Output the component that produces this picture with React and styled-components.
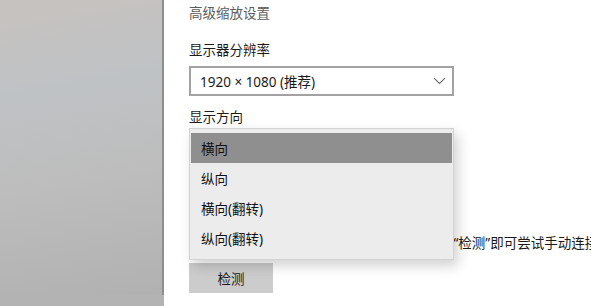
import React from 'react';
import styled, { createGlobalStyle } from 'styled-components';

const GlobalStyle = createGlobalStyle`
  html, body {
    margin: 0;
    padding: 0;
    width: 591px;
    height: 306px;
    overflow: hidden;
    background: #fff;
  }
  body {
    font-family: "Noto Sans", "Noto Sans CJK SC", sans-serif;
    font-size: 13.5px;
    color: #1a1a1a;
  }
`;

const ORIENTATIONS = ['横向', '纵向', '横向(翻转)', '纵向(翻转)'];

function ChevronDown() {
  return (
    <svg width="13" height="8" viewBox="0 0 13 8">
      <path d="M1 1.2 L6.5 6.5 L12 1.2" fill="none" stroke="#6a6a6a" strokeWidth="1.1" />
    </svg>
  );
}

function App() {
  return (
    <Page>
      <GlobalStyle />
      <SideBar />
      <Content>
        <LinkText>高级缩放设置</LinkText>
        <Label>显示器分辨率</Label>
        <Select>
          <span>1920 × 1080 (推荐)</span>
          <ChevronDown />
        </Select>
        <Label $top={11}>显示方向</Label>
        <OrientationWrap>
          <Select $hidden>
            <span>横向</span>
            <ChevronDown />
          </Select>
          <Menu>
            {ORIENTATIONS.map((item, i) => (
              <MenuItem key={item} $active={i === 0}>
                {item}
              </MenuItem>
            ))}
          </Menu>
        </OrientationWrap>
        <SubHeading>多显示器设置</SubHeading>
        <Paragraph>较旧的显示器可能不会始终自动连接。选择“检测”即可尝试手动连接到它们。</Paragraph>
        <DetectButton>检测</DetectButton>
      </Content>
    </Page>
  );
}

export default App;

const Page = styled.div`
  display: flex;
  width: 591px;
  height: 306px;
  overflow: hidden;
`;

const SideBar = styled.aside`
  flex: 0 0 162px;
  height: 295px;
  border-right: 2px solid #8e8e8e;
  background: linear-gradient(
    170deg,
    #c7c2bf 0%,
    #bfc2c5 30%,
    #bdbdbd 60%,
    #b1b1b1 100%
  );
  box-shadow: 0 11px 0 0 #b3b3b3;
`;

const Content = styled.main`
  flex: 1;
  display: flex;
  flex-direction: column;
  align-items: flex-start;
  padding: 3px 0 0 25px;
  min-width: 0;
`;

const LinkText = styled.div`
  line-height: 20px;
  color: #5c5c5c;
`;

const Label = styled.div`
  margin-top: ${p => p.$top ?? 17}px;
  line-height: 20px;
  color: #1a1a1a;
`;

const Select = styled.div`
  box-sizing: border-box;
  margin-top: 6px;
  width: 265px;
  height: 30px;
  display: flex;
  align-items: center;
  justify-content: space-between;
  padding: 0 6px 0 9px;
  border: 2px solid #a2a2a2;
  background: #fff;
  color: #1a1a1a;
  visibility: ${p => (p.$hidden ? 'hidden' : 'visible')};
`;

const OrientationWrap = styled.div`
  position: relative;
  margin-top: -4px;
`;

const Menu = styled.ul`
  position: absolute;
  left: 0;
  top: 5px;
  box-sizing: border-box;
  width: 265px;
  margin: 0;
  padding: 4px 0 6px;
  list-style: none;
  background: #ececec;
  border: 1px solid #d2d2d2;
  box-shadow: 4px 6px 12px rgba(0, 0, 0, 0.18);
  z-index: 2;
`;

const MenuItem = styled.li`
  height: 30px;
  display: flex;
  align-items: center;
  padding-left: 10px;
  margin: 0 1px;
  color: #111;
  background: ${p => (p.$active ? '#8f8f8f' : 'transparent')};
`;

const SubHeading = styled.div`
  margin-top: 34px;
  line-height: 20px;
  font-size: 15px;
`;

const Paragraph = styled.div`
  margin-top: 20px;
  padding-left: 8px;
  line-height: 20px;
  white-space: nowrap;
  color: #1a1a1a;
`;

const DetectButton = styled.button`
  margin-top: 10px;
  width: 84px;
  height: 30px;
  border: none;
  background: #cccccc;
  font-family: inherit;
  font-size: 13.5px;
  color: #1a1a1a;
  padding: 0;
`;
